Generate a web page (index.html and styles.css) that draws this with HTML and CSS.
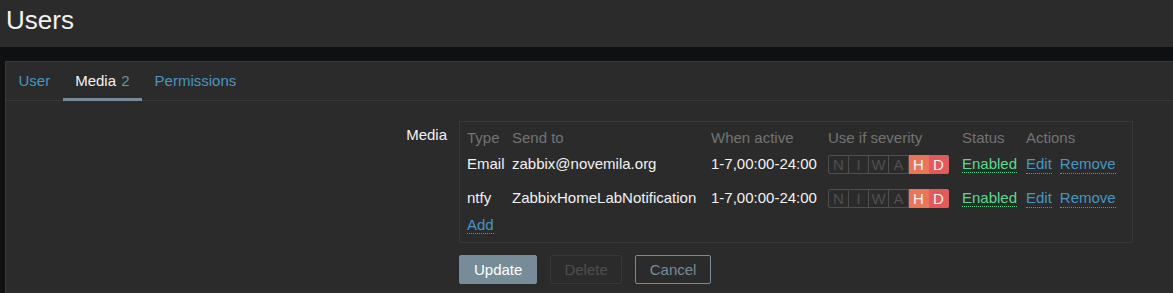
FILE: index.html
```html
<!DOCTYPE html>
<html lang="en">
<head>
<meta charset="utf-8">
<title>Users</title>
<link rel="stylesheet" href="styles.css">
</head>
<body>
<header class="page-header">
  <h1 class="page-title">Users</h1>
</header>
<main class="wrapper">
  <div class="tabs-container">
    <ul class="tabs">
      <li class="tab"><a class="tab-link" href="#">User</a></li>
      <li class="tab tab-active"><a class="tab-link" href="#">Media <span class="tab-count">2</span></a></li>
      <li class="tab"><a class="tab-link" href="#">Permissions</a></li>
    </ul>
    <div class="tab-content">
      <div class="form-row">
        <div class="form-label">Media</div>
        <div class="form-field">
          <div class="media-box">
            <table class="media-table">
              <colgroup>
                <col class="col-type">
                <col class="col-send">
                <col class="col-when">
                <col class="col-sev">
                <col class="col-status">
                <col class="col-actions">
              </colgroup>
              <thead>
                <tr>
                  <th>Type</th>
                  <th>Send to</th>
                  <th>When active</th>
                  <th>Use if severity</th>
                  <th>Status</th>
                  <th>Actions</th>
                </tr>
              </thead>
              <tbody>
                <tr class="data-row">
                  <td>Email</td>
                  <td>zabbix@novemila.org</td>
                  <td>1-7,00:00-24:00</td>
                  <td>
                    <div class="sev">
                      <span class="sev-cell">N</span><span class="sev-cell">I</span><span class="sev-cell">W</span><span class="sev-cell">A</span><span class="sev-cell sev-high">H</span><span class="sev-cell sev-disaster">D</span>
                    </div>
                  </td>
                  <td><a class="link-action status-on" href="#">Enabled</a></td>
                  <td><div class="actions"><a class="link-action" href="#">Edit</a><a class="link-action" href="#">Remove</a></div></td>
                </tr>
                <tr class="data-row">
                  <td>ntfy</td>
                  <td>ZabbixHomeLabNotification</td>
                  <td>1-7,00:00-24:00</td>
                  <td>
                    <div class="sev">
                      <span class="sev-cell">N</span><span class="sev-cell">I</span><span class="sev-cell">W</span><span class="sev-cell">A</span><span class="sev-cell sev-high">H</span><span class="sev-cell sev-disaster">D</span>
                    </div>
                  </td>
                  <td><a class="link-action status-on" href="#">Enabled</a></td>
                  <td><div class="actions"><a class="link-action" href="#">Edit</a><a class="link-action" href="#">Remove</a></div></td>
                </tr>
                <tr class="add-row">
                  <td colspan="6"><a class="link-action" href="#">Add</a></td>
                </tr>
              </tbody>
            </table>
          </div>
        </div>
      </div>
      <div class="form-actions">
        <button class="btn btn-primary" type="button">Update</button>
        <button class="btn btn-disabled" type="button" disabled>Delete</button>
        <button class="btn btn-alt" type="button">Cancel</button>
      </div>
    </div>
  </div>
</main>
</body>
</html>
```
FILE: styles.css
```css
html, body {
  margin: 0;
  padding: 0;
}
body {
  background: #0e1012;
  color: #f2f2f2;
  font-family: "Liberation Sans", Arial, sans-serif;
  font-size: 15px;
  line-height: 18px;
  overflow: hidden;
  height: 293px;
}
a {
  color: #4796c4;
  text-decoration: none;
}
.page-header {
  background: #2b2b2b;
  height: 47px;
}
.page-title {
  margin: 0;
  padding: 5px 0 0 6px;
  font-size: 26px;
  line-height: 30px;
  font-weight: normal;
  color: #f2f2f2;
}
.wrapper {
  padding: 14px 0 0 5px;
}
.tabs-container {
  background: #2b2b2b;
  border-top: 1px solid #383838;
  border-left: 1px solid #383838;
  width: calc(100% + 40px);
  height: 400px;
}
.tabs {
  display: flex;
  list-style: none;
  margin: 0;
  padding: 0;
  border-bottom: 1px solid #383838;
}
.tab-link {
  display: block;
  padding: 10px 12.5px 8px;
  border-bottom: 3px solid transparent;
  margin-bottom: -1px;
}
.tab-active .tab-link {
  color: #f2f2f2;
  border-bottom-color: #768d99;
  padding-right: 12.5px;
}
.tab-count {
  color: #768d99;
  margin-left: 1px;
}
.tab-content {
  padding-top: 20px;
}
.form-row {
  display: grid;
  grid-template-columns: 441px 674px;
  column-gap: 12px;
}
.form-label {
  text-align: right;
  padding-top: 5px;
}
.media-box {
  border: 1px solid #383838;
  padding: 0 7px 8px 7px;
}
.media-table {
  border-collapse: collapse;
  table-layout: fixed;
  width: 658px;
}
.col-type { width: 45px; }
.col-send { width: 199px; }
.col-when { width: 117px; }
.col-sev { width: 134px; }
.col-status { width: 64px; }
.media-table th {
  font-weight: normal;
  color: #737373;
  text-align: left;
  padding: 7px 0 0 0;
  height: 18px;
  white-space: nowrap;
}
.media-table td {
  padding: 0;
  white-space: nowrap;
}
.data-row td {
  height: 34px;
  vertical-align: middle;
}
.add-row td {
  padding-top: 1px;
}
.actions {
  display: flex;
  gap: 8px;
}
.link-action {
  border-bottom: 1px dotted currentColor;
}
.status-on {
  color: #59db8f;
}
.sev {
  display: flex;
  width: 121px;
  height: 19px;
  box-sizing: border-box;
}
.sev-cell {
  flex: 1;
  text-align: center;
  line-height: 17px;
  color: #4f4f4f;
  border: 1px solid #4f4f4f;
  border-left-width: 0;
  font-size: 15px;
}
.sev-cell:first-child {
  border-left-width: 1px;
  border-radius: 2px 0 0 2px;
}
.sev-high {
  background: #e97659;
  border-color: #e97659;
  color: #f2f2f2;
}
.sev-disaster {
  background: #e45959;
  border-color: #e45959;
  color: #f2f2f2;
  border-radius: 0 2px 2px 0;
}
.form-actions {
  display: flex;
  gap: 13px;
  padding: 12px 0 0 453px;
}
.btn {
  font-family: "Liberation Sans", Arial, sans-serif;
  font-size: 15px;
  height: 29px;
  padding: 0 14px;
  border-radius: 2px;
  border: 1px solid #768d99;
  background: transparent;
  cursor: pointer;
}
.btn-primary {
  background: #768d99;
  color: #ffffff;
}
.btn-disabled {
  border-color: #383838;
  color: #4f4f4f;
  padding: 0 13px;
}
.btn-alt {
  color: #768d99;
  background: #2b2b2b;
}
```
